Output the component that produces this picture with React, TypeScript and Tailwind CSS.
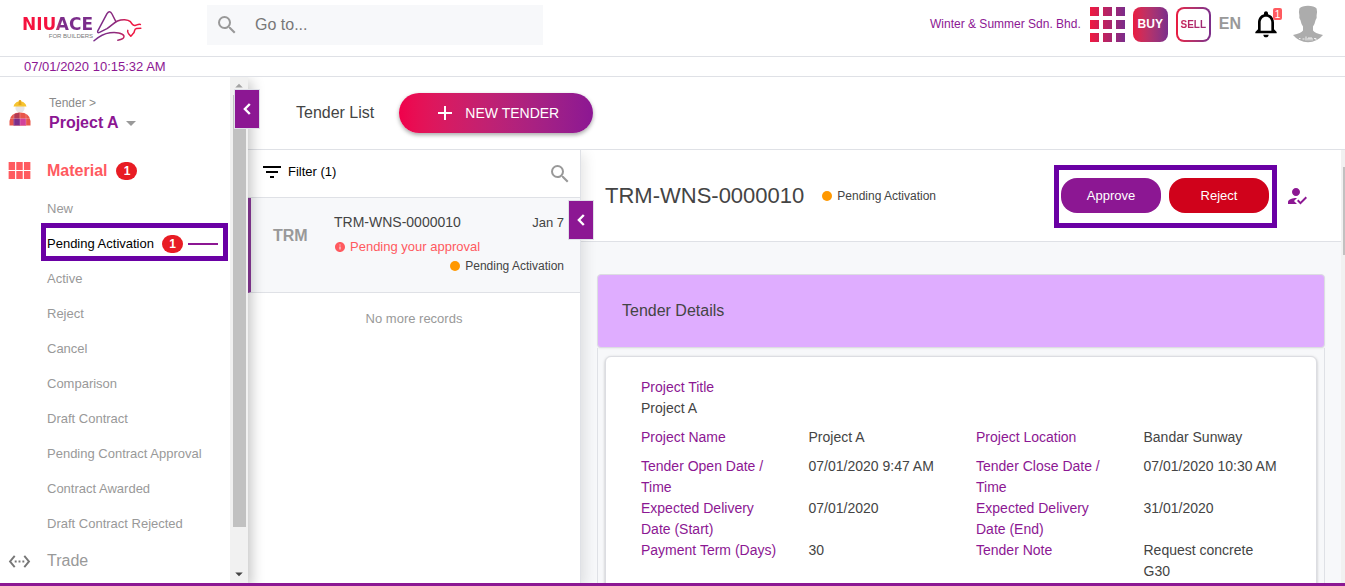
import React from "react";
import {
  MdAdd,
  MdArrowDropDown,
  MdArrowDropUp,
  MdFilterList,
  MdHowToReg,
  MdInfo,
  MdNotificationsNone,
  MdSearch,
  MdSettingsEthernet,
  MdViewModule,
} from "react-icons/md";

const statuses: { label: string; count?: number }[] = [
  { label: "New" },
  { label: "Pending Activation", count: 1 },
  { label: "Active" },
  { label: "Reject" },
  { label: "Cancel" },
  { label: "Comparison" },
  { label: "Draft Contract" },
  { label: "Pending Contract Approval" },
  { label: "Contract Awarded" },
  { label: "Draft Contract Rejected" },
];

const details: [string, string][] = [
  ["Project Name", "Project A"],
  ["Project Location", "Bandar Sunway"],
  ["Tender Open Date / Time", "07/01/2020 9:47 AM"],
  ["Tender Close Date / Time", "07/01/2020 10:30 AM"],
  ["Expected Delivery Date (Start)", "07/01/2020"],
  ["Expected Delivery Date (End)", "31/01/2020"],
  ["Payment Term (Days)", "30"],
  ["Tender Note", "Request concrete G30"],
];

function Logo() {
  return (
    <a href="#home" className="flex w-[183px] shrink-0 items-center pl-[22px]">
      <span className="flex flex-col items-end pt-1">
        <span className="bg-linear-to-r from-[#f5123f] from-45% to-[#7b2d8b] to-55% bg-clip-text font-['DejaVu_Sans',sans-serif] text-[17px] leading-4 font-bold text-transparent">
          NIUACE
        </span>
        <span className="text-[6px] leading-2 text-[#777]">FOR BUILDERS</span>
      </span>
      <svg width="50" height="34" viewBox="95 9 50 34" fill="none" strokeWidth="1.5" strokeLinecap="round" strokeLinejoin="round" aria-hidden="true">
        <defs>
          <linearGradient id="bull" gradientUnits="userSpaceOnUse" x1="100" y1="0" x2="140" y2="0">
            <stop offset="0" stopColor="#7b2d8b" />
            <stop offset="0.45" stopColor="#8f2a7c" />
            <stop offset="0.8" stopColor="#ee1742" />
          </linearGradient>
        </defs>
        <path
          stroke="url(#bull)"
          d="M118 21.8 L114 14 Q111.7 9.6 109 13.6 L99.8 30.8 Q99 33.4 101.5 32.4 L109 28.6 C113 26.4 115.5 22.8 119.5 21 C124 19 130 19.2 132.4 21.6 C133.6 23.6 134.8 25.8 137 25.4 C139 25.2 139.5 24 142.4 24.4 M142.8 28.2 L138.5 28.4 Q136.8 28.8 136.6 30.6 Q136.4 33 134.4 34.4 L132.8 36.2 L130.4 33.4 Q129.2 31.8 129.8 30.4"
        />
        <path
          stroke="url(#bull)"
          d="M96 40.8 C101 36.5 106 33.6 112 32.8 C118 32 124.5 33 125.8 35.6 C126.6 38.2 124 39.8 119.8 40.2"
        />
      </svg>
    </a>
  );
}

function WorkerIcon() {
  return (
    <svg width="22" height="28" viewBox="0 0 22 28" aria-hidden="true">
      <circle cx="11" cy="9" r="4.6" fill="#e8e6e6" />
      <path d="M4.5 7.5 Q5.6 3.4 9.6 2.6 L10 1.2 H12 L12.4 2.6 Q16.4 3.4 17.5 7.5 Z" fill="#f6c32f" />
      <path d="M10 1.2 H12 L12.5 6 H9.5 Z" fill="#e3a51f" />
      <path d="M0.5 26.5 V22 Q1.5 13.5 11 13.5 Q20.5 13.5 21.5 22 V26.5 Z" fill="#e8564a" />
      <path d="M5 15.2 L10.5 13.6 V19.5 H5 Z" fill="#b23a55" />
      <path d="M4.5 19.5 H11 V26.5 H4.5 Z" fill="#7b2d8b" />
      <path d="M11 19.5 H17 V26.5 H11 Z" fill="#d2429b" />
      <path d="M0.5 19.5 H21.4 M5 15 V26 M11 13.5 V26 M17 15 V26" stroke="#fff" strokeOpacity="0.35" strokeWidth="0.6" />
    </svg>
  );
}

function Avatar() {
  return (
    <svg width="32" height="38" viewBox="0 0 32 38" aria-hidden="true" className="block">
      <path
        fill="#acacac"
        d="M7.4 3.5 Q10 0.8 16 0.8 Q22 0.8 24.6 3.5 Q25.4 6 24.6 10.5 Q25.2 12.5 23.6 15 Q22.8 19 21 21.5 V25.4 Q22.5 28 31 30 Q25 37.2 16 37.2 Q7 37.2 1 30 Q9.5 28 11 25.4 V21.5 Q9.2 19 8.4 15 Q6.8 12.5 7.4 10.5 Q6.6 6 7.4 3.5 Z"
      />
      <path
        d="M7 33.5 H8.5 M10.5 34 H12.5 M14 31.5 V35.5 M16 35.5 V33 H18 V35.5 M18 33 H20 V35.5 M22 33.5 H24 V35"
        stroke="#eee"
        fill="none"
        strokeWidth="1"
      />
    </svg>
  );
}

function Badge({ count }: { count: number }) {
  return (
    <span className="flex h-[18px] w-[21px] items-center justify-center rounded-full bg-[#e81c24] text-[12px] font-bold text-white">
      {count}
    </span>
  );
}

function StatusTag() {
  return (
    <span className="flex items-center gap-[5px] text-[12px] leading-4 text-[#444]">
      <span className="size-[10px] rounded-full bg-[#ff9800]" />
      Pending Activation
    </span>
  );
}

function CollapseButton({ label }: { label: string }) {
  return (
    <button
      type="button"
      aria-label={label}
      className="flex h-10 w-[26px] items-center justify-center border border-[#dfe0e8] bg-[#8c1793] text-white"
    >
      <svg width="8" height="12" viewBox="0 0 8 12" fill="none" stroke="currentColor" strokeWidth="2.4" aria-hidden="true">
        <path d="M6.8 1 L1.9 6 L6.8 11" />
      </svg>
    </button>
  );
}

function Header() {
  return (
    <header className="flex h-[57px] shrink-0 items-start border-b border-[#dfe1e6]">
      <div className="shrink-0 pt-[9px]">
        <Logo />
      </div>
      <label className="mt-[5px] ml-6 flex h-10 w-1/4 items-center gap-4 bg-[#f7f8fa] pl-2">
        <MdSearch size={24} className="shrink-0 text-[#999]" />
        <input
          type="text"
          aria-label="Go to"
          placeholder="Go to..."
          className="w-full bg-transparent text-[16px] text-[#666] outline-none placeholder:text-[#777]"
        />
      </label>
      <div className="ml-auto flex shrink-0 items-center pt-[5px] pr-[21px]">
        <span className="mr-[9px] text-[12px] whitespace-nowrap text-[#8c1793]">Winter &amp; Summer Sdn. Bhd.</span>
        <button type="button" aria-label="Apps" className="mr-2">
          <svg width="35" height="35" viewBox="0 0 35 35" aria-hidden="true" className="block">
            <defs>
              <linearGradient id="apps" gradientUnits="userSpaceOnUse" x1="0" y1="0" x2="35" y2="0">
                <stop offset="0" stopColor="#f01a40" />
                <stop offset="1" stopColor="#7b2d8b" />
              </linearGradient>
            </defs>
            <path
              fill="url(#apps)"
              d="M0 0h9v9H0z M13 0h9v9h-9z M26 0h9v9h-9z M0 13h9v9H0z M13 13h9v9h-9z M26 13h9v9h-9z M0 26h9v9H0z M13 26h9v9h-9z M26 26h9v9h-9z"
            />
          </svg>
        </button>
        <button
          type="button"
          className="mr-2 size-[35px] rounded-lg bg-linear-to-r from-[#ea1a40] to-[#7b2d8b] text-[12px] font-bold text-white"
        >
          BUY
        </button>
        <button type="button" className="mr-2 size-[35px] rounded-lg bg-linear-to-r from-[#ea1a40] to-[#7b2d8b] p-[2px]">
          <span className="flex size-full items-center justify-center rounded-md bg-white">
            <span className="bg-linear-to-r from-[#c81f55] to-[#9a2878] bg-clip-text text-[10px] font-bold text-transparent">
              SELL
            </span>
          </span>
        </button>
        <button type="button" className="mr-[9px] text-[16px] font-bold text-[#999]">
          EN
        </button>
        <button type="button" aria-label="Notifications" className="relative mr-[10px]">
          <MdNotificationsNone size={32} className="block text-black" />
          <span className="absolute top-0 right-0 flex h-3 w-[9px] items-center justify-center rounded-xs bg-[#ff5a5f] text-[10px] text-white">
            1
          </span>
        </button>
        <button type="button" aria-label="Account">
          <Avatar />
        </button>
      </div>
    </header>
  );
}

function Sidebar() {
  return (
    <aside className="relative z-30 flex w-[248px] shrink-0 bg-white shadow-[4px_4px_12px_rgba(0,0,0,0.22)]">
      <nav className="min-w-0 flex-1 overflow-hidden">
        <div className="flex h-[73px] items-center pb-[2px] pl-[9px]">
          <WorkerIcon />
          <div className="pl-[18px]">
            <div className="text-[12px] leading-5 text-[#8a8a8a]">Tender &gt;</div>
            <button type="button" className="flex items-center text-[16px] leading-5 font-bold text-[#8c1793]">
              Project A
              <MdArrowDropDown size={24} className="-my-1 text-[#999]" />
            </button>
          </div>
        </div>
        <a href="#material" className="flex h-[41px] items-center gap-[9px] pl-[5px] text-[16px] font-bold text-[#ff5a5f]">
          <MdViewModule size={29} className="shrink-0" />
          <span className="pl-1">Material</span>
          <Badge count={1} />
        </a>
        <ul>
          {statuses.map((s) =>
            s.count ? (
              <li key={s.label} className="relative">
                <a href="#status" className="flex h-[35px] items-center pl-[47px] text-[13px] text-black">
                  {s.label}
                  <span className="pr-[5px] pl-2">
                    <Badge count={s.count} />
                  </span>
                  <span className="h-[2px] w-[30px] bg-[#8c1793]" />
                </a>
                <span className="pointer-events-none absolute -top-[3px] right-[2px] bottom-0 left-[41px] border-[5px] border-[#6a00a4]" />
              </li>
            ) : (
              <li key={s.label}>
                <a href="#status" className="flex h-[35px] items-center pl-[47px] text-[13px] text-[#999]">
                  {s.label}
                </a>
              </li>
            ),
          )}
        </ul>
        <a href="#trade" className="flex h-10 items-center gap-4 pl-2 text-[16px] text-[#999]">
          <MdSettingsEthernet size={23} className="shrink-0 text-[#777]" />
          Trade
        </a>
      </nav>
      <div className="flex w-[18px] flex-col items-center bg-[#f1f1f1]" aria-hidden="true">
        <MdArrowDropUp size={18} className="shrink-0 text-[#a3a3a3]" />
        <div className="w-[13px] flex-1 bg-[#c1c1c1]" />
        <div className="flex h-[56px] items-end">
          <MdArrowDropDown size={18} className="text-[#444]" />
        </div>
      </div>
      <div className="absolute top-3 -right-3">
        <CollapseButton label="Collapse sidebar" />
      </div>
    </aside>
  );
}

function TenderList() {
  return (
    <section className="relative z-20 flex w-[333px] shrink-0 flex-col border-r border-[#dfe1e6] bg-white shadow-[4px_4px_12px_rgba(0,0,0,0.1)]">
      <div className="flex h-12 items-center justify-between border-b border-[#dfe1e6] pr-2 pl-3">
        <button type="button" className="flex items-center gap-1 pb-1 text-[13px] text-black">
          <MdFilterList size={24} />
          Filter (1)
        </button>
        <button type="button" aria-label="Search tenders" className="text-[#999]">
          <MdSearch size={24} />
        </button>
      </div>
      <a
        href="#tender"
        className="flex h-[95px] border-b border-l-3 border-b-[#dfe1e6] border-l-[#8c3a9b] bg-[#f7f8fa] pr-4 pl-[22px]"
      >
        <span className="w-[61px] shrink-0 pt-[26px] text-[16px] font-bold text-[#999]">TRM</span>
        <span className="flex-1 pt-[13px]">
          <span className="flex items-center justify-between text-[14px] leading-[22px] text-[#444]">
            TRM-WNS-0000010
            <span className="pt-[2px] text-[13px] leading-5">Jan 7</span>
          </span>
          <span className="flex items-center gap-1 pt-1 text-[13px] leading-5 text-[#ff5a5f]">
            <MdInfo size={12} />
            Pending your approval
          </span>
          <span className="flex justify-end pt-[1px]">
            <StatusTag />
          </span>
        </span>
      </a>
      <p className="pt-4 text-center text-[13px] leading-5 text-[#999]">No more records</p>
      <div className="absolute top-[50px] -right-[14px]">
        <CollapseButton label="Collapse list" />
      </div>
    </section>
  );
}

function TenderDetail() {
  return (
    <section className="flex min-w-0 flex-1">
      <div className="flex min-w-0 flex-1 flex-col">
        <div className="flex h-[92px] shrink-0 items-center border-b border-[#dfe1e6] bg-white pr-8 pl-6">
          <h1 className="pr-[18px] text-[22px] whitespace-nowrap text-[#444]">TRM-WNS-0000010</h1>
          <StatusTag />
          <div className="mt-[2px] ml-auto flex gap-2 border-[5px] border-[#6a00a4] pt-2 pr-[3px] pb-[10px] pl-[2px] text-[13px] text-white">
            <button type="button" className="h-[35px] w-[100px] rounded-[16px] bg-[#8c1793]">
              Approve
            </button>
            <button type="button" className="h-[35px] w-[100px] rounded-[16px] bg-[#d0021b]">
              Reject
            </button>
          </div>
          <button type="button" aria-label="Assign approver" className="ml-2 text-[#8c1793]">
            <MdHowToReg size={24} />
          </button>
        </div>
        <div className="min-h-0 flex-1 overflow-hidden bg-[#f7f8fa] pt-8 pr-4 pl-4">
          <h2 className="flex h-[74px] items-center rounded-sm border border-[#dcdde2] bg-[#dfadff] pl-6 text-[16px] text-[#444] shadow-xs">
            Tender Details
          </h2>
          <div className="border-x border-[#dfe1e6] px-[7px] pt-2">
            <div className="rounded-md border border-[#dcdde2] bg-white px-5 pt-5 pb-10 text-[14px] leading-[21px] text-[#444] shadow-[0_1px_3px_rgba(0,0,0,0.25)]">
              <dl className="grid grid-cols-4">
                <div className="col-span-4 px-[15px] pb-2">
                  <dt className="text-[#8c1793]">Project Title</dt>
                  <dd>Project A</dd>
                </div>
                {details.map(([label, value]) => (
                  <div key={label} className="col-span-2 grid grid-cols-2">
                    <dt className="px-[15px] text-[#8c1793]">{label}</dt>
                    <dd className="px-[15px] pb-2">{value}</dd>
                  </div>
                ))}
              </dl>
            </div>
          </div>
        </div>
      </div>
      <div className="w-1 shrink-0 bg-[#f1f1f1] pt-[17px] pl-[2px]" aria-hidden="true">
        <div className="h-[88px] bg-[#c1c1c1]" />
      </div>
    </section>
  );
}

export default function App() {
  return (
    <div className="flex h-screen flex-col overflow-hidden border-b-3 border-[#8c1793] bg-white font-['Liberation_Sans',Arial,sans-serif]">
      <Header />
      <div className="h-5 shrink-0 border-b border-[#dfe1e6] pl-6 text-[13px] leading-[19px] text-[#8c1793]">
        07/01/2020 10:15:32 AM
      </div>
      <div className="flex min-h-0 flex-1 overflow-hidden">
        <Sidebar />
        <main className="flex min-w-0 flex-1 flex-col">
          <div className="flex h-[73px] shrink-0 items-center border-b border-[#dfe1e6] pl-12 text-[16px] text-[#444]">
            Tender List
            <button
              type="button"
              className="ml-[25px] flex h-10 w-[194px] items-center justify-center gap-2 rounded-full bg-linear-to-r from-[#f0004b] to-[#8c1793] text-[14px] text-white shadow-[0_2px_4px_rgba(0,0,0,0.35)]"
            >
              <MdAdd size={24} />
              NEW TENDER
            </button>
          </div>
          <div className="flex min-h-0 flex-1 overflow-hidden">
            <TenderList />
            <TenderDetail />
          </div>
        </main>
      </div>
    </div>
  );
}
